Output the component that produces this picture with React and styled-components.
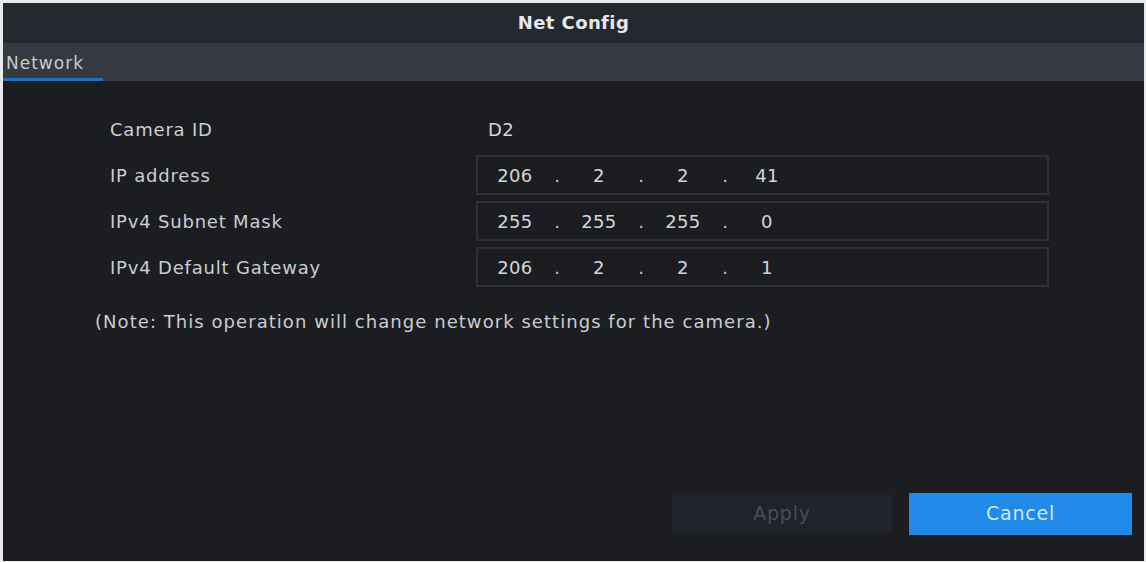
import React from "react";
import styled, { createGlobalStyle } from "styled-components";

const Global = createGlobalStyle`
  html, body { margin: 0; padding: 0; background: #e9eaec; }
  body { font-family: "DejaVu Sans", "Liberation Sans", sans-serif; }
`;

const Frame = styled.div`
  width: 1146px;
  height: 562px;
  box-sizing: border-box;
  padding: 3px 2px 1px 3px;
  background: #e9eaec;
`;

const Dialog = styled.div`
  height: 100%;
  display: flex;
  flex-direction: column;
  background: #1b1d21;
`;

const TitleBar = styled.div`
  height: 40px;
  flex: none;
  display: flex;
  align-items: center;
  justify-content: center;
  background: #25282f;
  color: #e6e7ea;
  font-size: 18px;
  font-weight: bold;
  letter-spacing: 0.4px;
  padding-bottom: 2px;
  box-sizing: border-box;
`;

const TabBar = styled.div`
  height: 38px;
  flex: none;
  display: flex;
  align-items: stretch;
  background: #363842;
`;

const Tab = styled.div`
  display: flex;
  align-items: center;
  padding: 4px 0 0 3px;
  width: 100px;
  box-sizing: border-box;
  color: #c9cbd0;
  font-size: 17px;
  letter-spacing: 1px;
  border-bottom: ${(p) => (p.$active ? "3px solid #1d6fc0" : "3px solid transparent")};
`;

const Body = styled.div`
  flex: 1;
  display: flex;
  flex-direction: column;
  padding: 28px 0 0 0;
`;

const Form = styled.div`
  display: flex;
  flex-direction: column;
  gap: 6px;
  padding-left: 107px;
`;

const Row = styled.div`
  display: grid;
  grid-template-columns: 366px 573px;
  align-items: center;
  height: 40px;
`;

const Label = styled.div`
  color: #cbccd0;
  font-size: 18px;
  letter-spacing: 0.8px;
`;

const PlainValue = styled.div`
  color: #d4d5d8;
  font-size: 18px;
  letter-spacing: 0.5px;
  padding-left: 12px;
`;

const IpBox = styled.div`
  height: 40px;
  box-sizing: border-box;
  border: 2px solid #2c2f35;
  display: flex;
  align-items: center;
  padding-left: 3px;
`;

const Seg = styled.span`
  width: 68px;
  text-align: center;
  color: #d4d5d8;
  font-size: 18px;
  letter-spacing: 0.3px;
`;

const Dot = styled.span`
  width: 16px;
  text-align: center;
  color: #c4c5c9;
  font-size: 18px;
`;

const Note = styled.div`
  margin-top: 24px;
  padding-left: 92px;
  color: #cbccd0;
  font-size: 18px;
  letter-spacing: 1.05px;
`;

const Footer = styled.div`
  margin-top: auto;
  display: flex;
  justify-content: flex-end;
  align-items: center;
  gap: 17px;
  padding: 0 12px 26px 0;
`;

const Button = styled.button`
  height: ${(p) => (p.$primary ? "42px" : "38px")};
  width: ${(p) => (p.$primary ? "223px" : "220px")};
  border: none;
  background: ${(p) => (p.$primary ? "#1f8ae8" : "#20232a")};
  color: ${(p) => (p.$primary ? "#d3e6f8" : "#494d56")};
  font-family: "DejaVu Sans", "Liberation Sans", sans-serif;
  font-size: 19px;
  letter-spacing: 0.8px;
  padding: 0 0 2px 0;
`;

const IpField = ({ parts }) => (
  <IpBox>
    {parts.map((p, i) => (
      <React.Fragment key={i}>
        {i > 0 && <Dot>.</Dot>}
        <Seg>{p}</Seg>
      </React.Fragment>
    ))}
  </IpBox>
);

export default function App() {
  return (
    <>
      <Global />
      <Frame>
        <Dialog>
          <TitleBar>Net Config</TitleBar>
          <TabBar>
            <Tab $active>Network</Tab>
          </TabBar>
          <Body>
            <Form>
              <Row>
                <Label>Camera ID</Label>
                <PlainValue>D2</PlainValue>
              </Row>
              <Row>
                <Label>IP address</Label>
                <IpField parts={["206", "2", "2", "41"]} />
              </Row>
              <Row>
                <Label>IPv4 Subnet Mask</Label>
                <IpField parts={["255", "255", "255", "0"]} />
              </Row>
              <Row>
                <Label>IPv4 Default Gateway</Label>
                <IpField parts={["206", "2", "2", "1"]} />
              </Row>
            </Form>
            <Note>(Note: This operation will change network settings for the camera.)</Note>
            <Footer>
              <Button disabled>Apply</Button>
              <Button $primary>Cancel</Button>
            </Footer>
          </Body>
        </Dialog>
      </Frame>
    </>
  );
}
